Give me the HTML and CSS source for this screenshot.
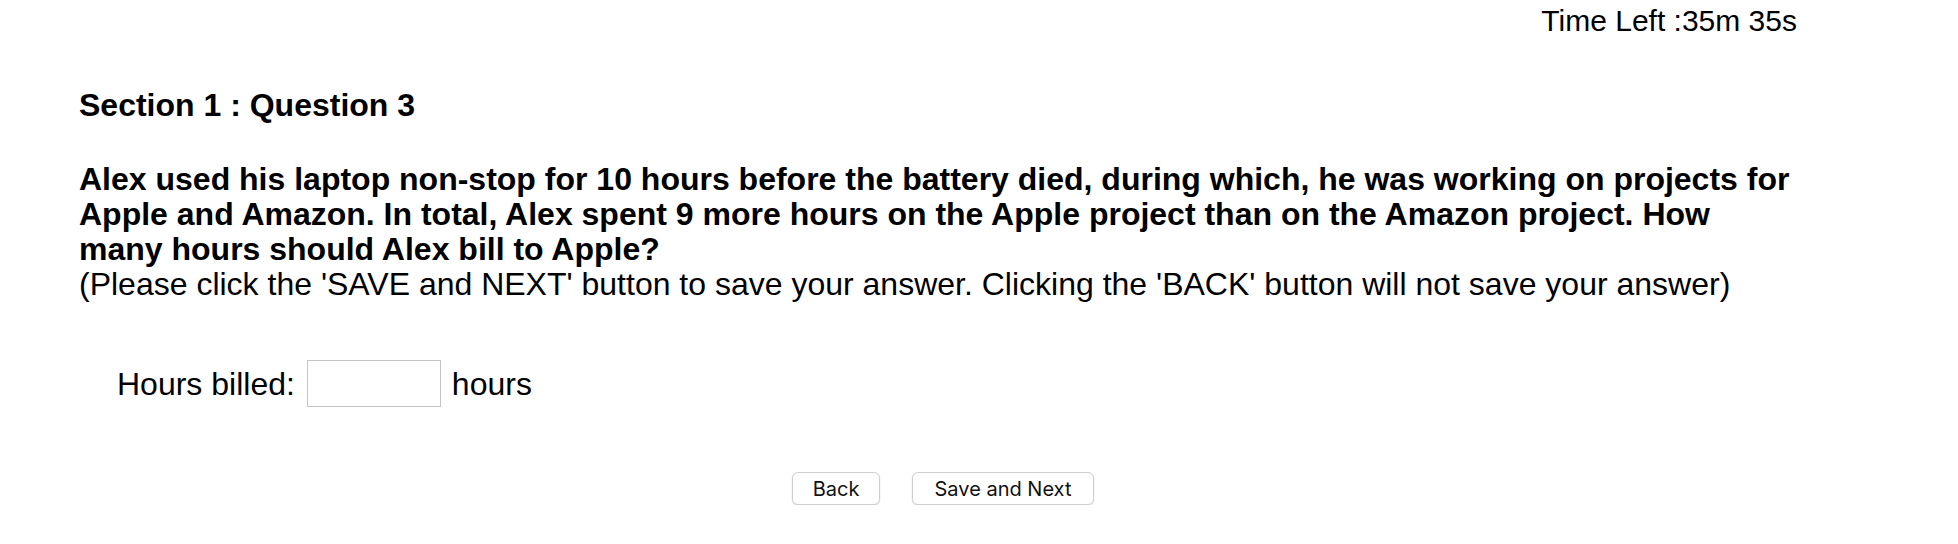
FILE: index.html
```html
<!DOCTYPE html>
<html>
<head>
<meta charset="utf-8">
<link rel="stylesheet" href="styles.css">
</head>
<body>
<div class="page">
  <div class="timer">Time Left :35m 35s</div>
  <h2 class="section">Section 1 : Question 3</h2>
  <p class="question"><b>Alex used his laptop non-stop for 10 hours before the battery died, during which, he was working on projects for Apple and Amazon. In total, Alex spent 9 more hours on the Apple project than on the Amazon project. How many hours should Alex bill to Apple?</b><br>(Please click the 'SAVE and NEXT' button to save your answer. Clicking the 'BACK' button will not save your answer)</p>
  <div class="answer">
    <label class="label">Hours billed:</label>
    <input class="field" type="text">
    <span class="unit">hours</span>
  </div>
  <div class="actions">
    <button class="btn btn-back">Back</button>
    <button class="btn btn-next">Save and Next</button>
  </div>
</div>
</body>
</html>
```
FILE: styles.css
```css
html, body {
  margin: 0;
  padding: 0;
  background: #ffffff;
}
body {
  font-family: "Liberation Sans", Arial, sans-serif;
  color: #000;
}
.page {
  width: 1728px;
  padding-left: 79px;
  box-sizing: content-box;
}
.timer {
  margin-top: 3px;
  text-align: right;
  padding-right: 10px;
  font-size: 30px;
  line-height: 36px;
}
.section {
  margin: 48px 0 0 0;
  font-size: 32px;
  line-height: 36px;
  font-weight: bold;
}
.question {
  margin: 39px 0 0 0;
  font-size: 32px;
  line-height: 35px;
  width: 1715px;
}
.answer {
  margin-top: 58px;
  margin-left: 38px;
  display: flex;
  align-items: center;
  height: 47px;
  font-size: 32px;
  line-height: 36px;
}
.field {
  margin: 0 11px 0 12px;
  width: 134px;
  height: 47px;
  box-sizing: border-box;
  border: 1.5px solid #c4c4c4;
  padding: 0;
  font-size: 24px;
  outline: none;
}
.actions {
  margin-top: 65px;
  display: flex;
  justify-content: center;
  gap: 32px;
}
.btn {
  height: 33px;
  box-sizing: border-box;
  background: #fff;
  border: 1px solid #cfcfcf;
  border-radius: 6px;
  box-shadow: 0 1px 2px rgba(0,0,0,0.12);
  font-family: Inter, "Noto Sans", sans-serif;
  font-size: 20px;
  color: #111;
  padding: 0;
}
.btn-back { width: 88px; }
.btn-next { width: 182px; }
```
